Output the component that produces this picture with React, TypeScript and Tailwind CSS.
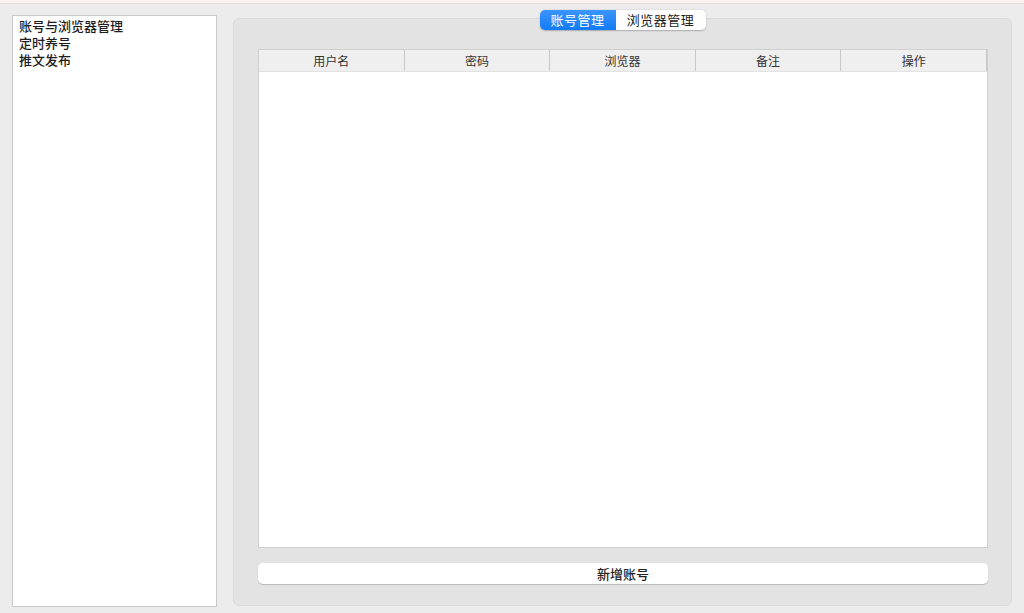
const columns = ["用户名", "密码", "浏览器", "备注", "操作"];
const menu = ["账号与浏览器管理", "定时养号", "推文发布"];

export default function App() {
  return (
    <div
      className="w-[1024px] h-[613px] bg-[#ececec] flex flex-col overflow-hidden text-[#1d1d1d]"
      style={{ fontFamily: '"Noto Sans CJK SC", "Noto Sans", sans-serif' }}
    >
      <div className="h-[4px] bg-[#fbf1ef] border-b border-[#e2dcda]" />

      <div className="flex-1 flex gap-4 pl-3 pr-3 pt-[11px] pb-[6px]">
        {/* sidebar list */}
        <div className="w-[205px] bg-white border border-[#c9c9c9] pt-[1px] pl-[6px]">
          {menu.map((item) => (
            <div key={item} className="text-[13px] leading-[17px] font-medium">
              {item}
            </div>
          ))}
        </div>

        {/* group box */}
        <div className="flex-1 relative pt-[3px] pb-[1px]">
          <div className="h-full bg-[#e3e3e3] border border-[#dadada] rounded-[6px] flex flex-col pt-[30px] pl-[24px] pr-[23px] pb-[21px]">
            <div className="flex-1 bg-white border border-[#cfcfcf] flex flex-col">
              <div className="h-[22px] bg-[#efefef] border-b border-[#e2e2e2] grid grid-cols-5">
                {columns.map((c) => (
                  <div
                    key={c}
                    className="flex items-center justify-center text-[12px] text-[#333] border-r border-[#c8c8c8]"
                  >
                    {c}
                  </div>
                ))}
              </div>
              <div className="flex-1" />
            </div>

            <button className="mt-[15px] h-[21px] bg-white rounded-[5px] shadow-[0_1px_1px_rgba(0,0,0,0.18)] text-[13px] font-medium text-[#222] flex items-center justify-center">
              新增账号
            </button>
          </div>

          {/* segmented tabs */}
          <div className="absolute top-[-5px] left-0 right-0 flex justify-center">
            <div className="flex h-[20px] rounded-[5px] shadow-[0_0.5px_1.5px_rgba(0,0,0,0.25)] overflow-hidden text-[13px] tracking-[0.5px]">
              <div className="w-[76px] bg-gradient-to-b from-[#3a95fd] to-[#0f7bf5] text-white flex items-center justify-center">
                账号管理
              </div>
              <div className="w-[90px] bg-white text-[#222] flex items-center justify-center">
                浏览器管理
              </div>
            </div>
          </div>
        </div>
      </div>
    </div>
  );
}
